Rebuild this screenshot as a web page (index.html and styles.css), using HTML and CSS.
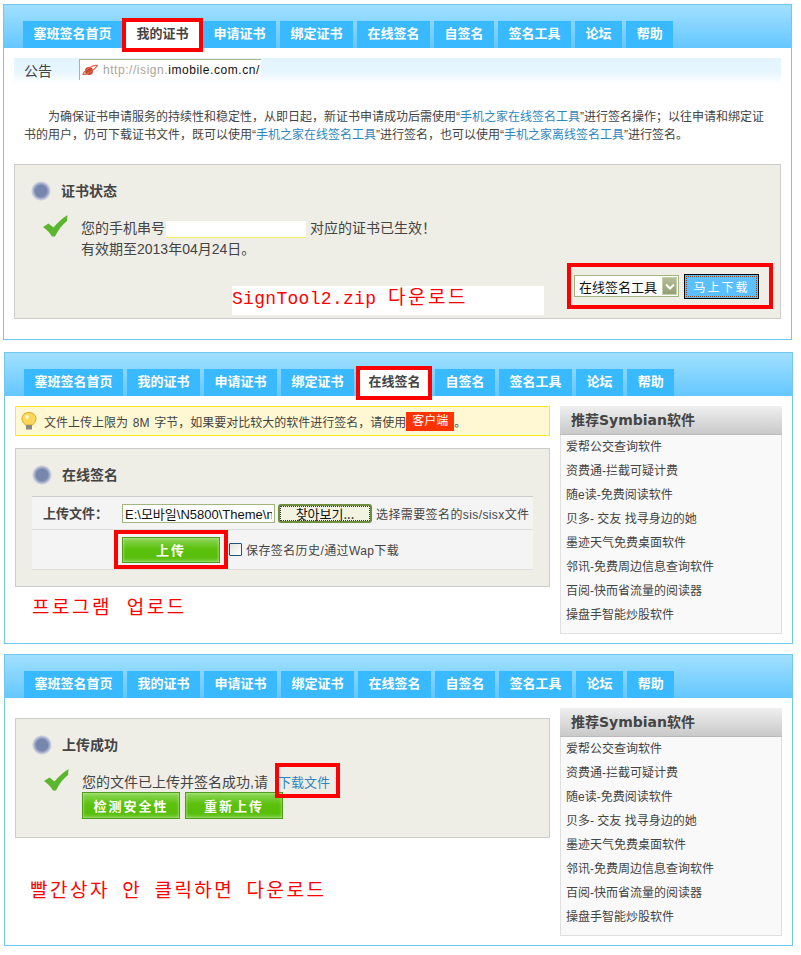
FILE: index.html
```html
<!DOCTYPE html>
<html>

<head>
  <title>Symbian signing</title>
  <meta charset="utf-8">
  <link rel="stylesheet" href="styles.css">
</head>

<body>
  <!-- Step 1: my certificate -->
  <div class="panel panel-first">
    <div class="top-bar">
      <a class="tab">塞班签名首页</a>
      <a class="tab tab-active tab-active-wide">我的证书</a>
      <a class="tab">申请证书</a>
      <a class="tab">绑定证书</a>
      <a class="tab">在线签名</a>
      <a class="tab">自签名</a>
      <a class="tab">签名工具</a>
      <a class="tab">论坛</a>
      <a class="tab">帮助</a>
    </div>
    <div class="panel-body">
      <div class="notice-bar">
        <span class="notice-label">公告</span>
        <div class="url-box">
          <svg class="url-icon" viewBox="0 0 16 12">
            <circle cx="7" cy="7" r="4" fill="#c8482c"></circle>
            <path d="M1 10.500C4 11 13 6 15.500 1.500 12 .5 3 5 1 10.500z" fill="none" stroke="#d9664c" stroke-width="1.200"></path>
          </svg>
          <span class="url-gray">http://isign.</span><span class="url-dark">imobile.com.cn/</span>
        </div>
      </div>
      <p class="intro">为确保证书申请服务的持续性和稳定性，从即日起，新证书申请成功后需使用“<a class="link">手机之家在线签名工具</a>”进行签名操作；以往申请和绑定证<br>书的用户，仍可下载证书文件，既可以使用“<a class="link">手机之家在线签名工具</a>”进行签名，也可以使用“<a class="link">手机之家离线签名工具</a>”进行签名。</p>

      <div class="box box-status">
        <div class="box-head"><span class="bullet"></span><h3>证书状态</h3></div>
        <div class="message">
          <svg class="check" viewBox="0 0 25 22"><path d="M0 12 5.500 8.500 10.500 12.500C14 8 19 3.500 24.500 0L24 6C19 10 15 15 12 21.500L9 21.500C7 18 4 15 0 12z" fill="#5bb62f"></path></svg>
          <div class="message-text">您的手机串号<span class="serial"></span>对应的证书已生效！<br>有效期至2013年04月24日。</div>
        </div>
        <div class="annotation annotation-plate"><span class="latin">SignTool2.zip</span> 다운로드</div>
        <div class="tools-foot">
          <div class="red-frame tools-frame">
            <div class="select">在线签名工具<span class="select-arrow"><svg viewBox="0 0 10 7" width="10" height="7"><path d="M1 1.500 5 5.500 9 1.500" fill="none" stroke="#fff" stroke-width="2"></path></svg></span></div>
            <button class="btn-blue">马上下载</button>
          </div>
        </div>
      </div>
    </div>
  </div>

  <!-- Step 2: online signing -->
  <div class="panel panel-second">
    <div class="top-bar">
      <a class="tab">塞班签名首页</a>
      <a class="tab">我的证书</a>
      <a class="tab">申请证书</a>
      <a class="tab">绑定证书</a>
      <a class="tab tab-active">在线签名</a>
      <a class="tab">自签名</a>
      <a class="tab">签名工具</a>
      <a class="tab">论坛</a>
      <a class="tab">帮助</a>
    </div>
    <div class="panel-body columns">
      <div class="main">
        <div class="tip">
          <svg class="bulb" viewBox="0 0 16 18">
            <path d="M8 .5C3.800.5 1 3.300 1 6.800 1 9.500 3 11 4.500 13H11.500C13 11 15 9.500 15 6.800 15 3.300 12.200.5 8 .5z" fill="#fbd75b" stroke="#d9a520"></path>
            <circle cx="6" cy="5" r="2" fill="#fff6c8"></circle>
            <rect x="5" y="13" width="6" height="4.500" fill="#8a8a80"></rect>
          </svg>
          <span>文件上传上限为 8M 字节，如果要对比较大的软件进行签名，请使用</span><span class="tip-badge">客户端</span><span>。</span>
        </div>
        <div class="box box-sign">
          <div class="box-head"><span class="bullet"></span><h3>在线签名</h3></div>
          <div class="form-table">
            <div class="form-row form-row-file">
              <label class="form-label">上传文件：</label>
              <input class="file-path" type="text" value="E:\모바일\N5800\Theme\n">
              <button class="btn-browse">찾아보기...</button>
              <span class="form-hint">选择需要签名的sis/sisx文件</span>
            </div>
            <div class="form-row form-row-submit">
              <div class="red-frame upload-frame"><button class="btn-green btn-upload">上传</button></div>
              <input class="check-input" type="checkbox">
              <span class="form-hint">保存签名历史/通过Wap下载</span>
            </div>
          </div>
        </div>
        <div class="annotation annotation-upload">프로그램 업로드</div>
      </div>
      <div class="side">
        <h4 class="side-head">推荐Symbian软件</h4>
        <ul class="side-list">
          <li>爱帮公交查询软件</li>
          <li>资费通-拦截可疑计费</li>
          <li>随e读-免费阅读软件</li>
          <li>贝多- 交友 找寻身边的她</li>
          <li>墨迹天气免费桌面软件</li>
          <li>邻讯-免费周边信息查询软件</li>
          <li>百阅-快而省流量的阅读器</li>
          <li>操盘手智能炒股软件</li>
        </ul>
      </div>
    </div>
  </div>

  <!-- Step 3: upload finished -->
  <div class="panel panel-third">
    <div class="top-bar">
      <a class="tab">塞班签名首页</a>
      <a class="tab">我的证书</a>
      <a class="tab">申请证书</a>
      <a class="tab">绑定证书</a>
      <a class="tab">在线签名</a>
      <a class="tab">自签名</a>
      <a class="tab">签名工具</a>
      <a class="tab">论坛</a>
      <a class="tab">帮助</a>
    </div>
    <div class="panel-body columns">
      <div class="main main-done">
        <div class="box box-done">
          <div class="box-head"><span class="bullet"></span><h3>上传成功</h3></div>
          <div class="message">
            <svg class="check" viewBox="0 0 25 22"><path d="M0 12 5.500 8.500 10.500 12.500C14 8 19 3.500 24.500 0L24 6C19 10 15 15 12 21.500L9 21.500C7 18 4 15 0 12z" fill="#5bb62f"></path></svg>
            <div class="message-text">您的文件已上传并签名成功,请<a class="link link-file">下载文件</a></div>
          </div>
          <div class="done-actions">
            <button class="btn-green btn-action">检测安全性</button>
            <button class="btn-green btn-action">重新上传</button>
          </div>
          <span class="link-mark"></span>
        </div>
        <div class="annotation annotation-done">빨간상자 안 클릭하면 다운로드</div>
      </div>
      <div class="side">
        <h4 class="side-head">推荐Symbian软件</h4>
        <ul class="side-list">
          <li>爱帮公交查询软件</li>
          <li>资费通-拦截可疑计费</li>
          <li>随e读-免费阅读软件</li>
          <li>贝多- 交友 找寻身边的她</li>
          <li>墨迹天气免费桌面软件</li>
          <li>邻讯-免费周边信息查询软件</li>
          <li>百阅-快而省流量的阅读器</li>
          <li>操盘手智能炒股软件</li>
        </ul>
      </div>
    </div>
  </div>
</body>

</html>
```

FILE: styles.css
```css
* {
  box-sizing: border-box;
}

body {
  margin: 0;
  background-color: #ffffff;
  color: #444444;
  font-family: "Liberation Sans", "Noto Sans CJK SC", sans-serif;
  font-size: 12px;
}

.panel {
  width: 789px;
  border: 1px solid #72c6f2;
}

.panel-first {
  height: 336px;
  margin: 4px 0 0 3px;
}

.panel-second {
  height: 292px;
  margin: 12px 0 0 4px;
}

.panel-third {
  height: 292px;
  margin: 10px 0 0 4px;
}

.top-bar {
  display: flex;
  align-items: flex-end;
  gap: 4px;
  height: 43px;
  padding-left: 19px;
  background: linear-gradient(#a2e0ff, #64c7ff);
}

.tab {
  position: relative;
  height: 27px;
  padding: 0 10.5px;
  background-color: #39b9ff;
  color: #ffffff;
  font-size: 13px;
  font-weight: bold;
  line-height: 26px;
  white-space: nowrap;
}

.tab-active {
  background-color: #ffffff;
  color: #444444;
}

.tab-active::after {
  content: "";
  position: absolute;
  inset: -3px -1px -4px -2px;
  border: 4px solid #ff0000;
}

.tab-active-wide::after {
  inset: -3px -4px -4px -4px;
}

.panel-body {
  padding: 10px 10px 0;
}

.columns {
  display: flex;
  gap: 10px;
}

.main {
  width: 535px;
}

.main-done {
  padding-top: 10px;
}

.link {
  color: #2f86be;
}

/* notice strip of the first panel */
.notice-bar {
  display: flex;
  height: 26px;
  padding: 1px 0 0 10px;
  background: linear-gradient(#e2f5ff, #e6f6ff 50%, #ffffff);
}

.notice-label {
  width: 55px;
  font-size: 14px;
  line-height: 24px;
}

.url-box {
  display: flex;
  align-items: center;
  width: 182px;
  height: 21px;
  padding-left: 2px;
  overflow: hidden;
  background-color: #ffffff;
  border-top: 1px solid #a9b88a;
  border-left: 1px solid #a9b88a;
  letter-spacing: 0.55px;
  white-space: nowrap;
}

.url-icon {
  flex: none;
  width: 16px;
  height: 12px;
  margin-right: 5px;
}

.url-gray {
  color: #a8a69a;
}

.url-dark {
  color: #111111;
}

.intro {
  margin: 24px 0 20px;
  padding-left: 10px;
  line-height: 18px;
  text-indent: 24px;
  white-space: nowrap;
}

/* grey content boxes */
.box {
  position: relative;
  background-color: #eeede6;
  border: 1px solid #cccccc;
}

.box-status {
  display: flex;
  flex-direction: column;
  height: 155px;
}

.box-sign {
  height: 139px;
  margin-top: 12px;
}

.box-done {
  height: 120px;
}

.box-head {
  display: flex;
  align-items: center;
  gap: 10px;
  height: 20px;
  margin: 16px 0 0 16px;
}

.box-head h3 {
  margin: 0 0 2px;
  font-size: 14px;
  font-weight: bold;
}

.bullet {
  width: 20px;
  height: 20px;
  border-radius: 50%;
  background: radial-gradient(circle, #7686ad 0, #7686ad 40%, #c6cbdc 62%, #eeede6 72%);
}

.message {
  display: flex;
  gap: 13px;
  margin: 14px 0 0 28px;
}

.check {
  flex: none;
  width: 25px;
  height: 22px;
}

.message-text {
  margin-top: 3px;
  font-size: 14px;
  line-height: 21px;
}

.serial {
  display: inline-block;
  width: 140px;
  height: 17px;
  margin: 0 4px 0 1px;
  background-color: #ffffff;
  border-bottom: 1px solid #f4f06a;
  vertical-align: middle;
}

/* red notes written over the capture */
.annotation {
  color: #ff0000;
  font-family: "Noto Sans CJK KR", sans-serif;
  font-size: 19px;
  letter-spacing: 2.5px;
  word-spacing: 8px;
  line-height: 20px;
  white-space: nowrap;
}

.annotation-plate {
  position: absolute;
  left: 217px;
  top: 121px;
  width: 312px;
  height: 29px;
  background-color: #ffffff;
  line-height: 19px;
  word-spacing: 5px;
}

.latin {
  font-family: "Liberation Mono", monospace;
  font-size: 18px;
  letter-spacing: 0.3px;
}

.annotation-upload {
  margin: 9px 0 0 17px;
}

.annotation-done {
  margin: 41px 0 0 15px;
  word-spacing: 5.5px;
}

.red-frame {
  border: 4px solid #ff0000;
}

.tools-foot {
  display: flex;
  justify-content: flex-end;
  margin-top: auto;
  padding: 0 7px 9px 0;
}

.tools-frame {
  display: flex;
  align-items: center;
  gap: 5px;
  width: 206px;
  height: 46px;
  padding-left: 3px;
}

.select {
  display: flex;
  align-items: center;
  justify-content: space-between;
  width: 105px;
  height: 22px;
  padding: 0 1px 0 4px;
  background-color: #ffffff;
  border: 1px solid #a3b57f;
  color: #111111;
  font-size: 13px;
  white-space: nowrap;
}

.select-arrow {
  display: flex;
  align-items: center;
  justify-content: center;
  width: 15px;
  height: 18px;
  background: linear-gradient(#b4bd94, #959f72);
  border: 1px solid #c6ccb0;
}

.btn-blue {
  width: 75px;
  height: 25px;
  padding: 0;
  background-color: #5cbfff;
  border: 1px solid #000000;
  color: #ffffff;
  font-family: inherit;
  font-size: 12px;
  letter-spacing: 2px;
  outline: 1px dotted #8a4a20;
  outline-offset: -3px;
}

/* yellow hint and sign form */
.tip {
  display: flex;
  align-items: center;
  height: 30px;
  padding-left: 5px;
  background-color: #fff8d2;
  border: 1px solid #ffe722;
  white-space: pre;
  word-spacing: 1.5px;
}

.bulb {
  flex: none;
  width: 16px;
  height: 18px;
  margin-right: 7px;
}

.tip-badge {
  width: 48px;
  height: 19px;
  background-color: #ff3300;
  color: #ffffff;
  line-height: 18px;
  text-align: center;
}

.form-table {
  width: 501px;
  margin: 11px 0 0 16px;
  background-color: #f4f4f4;
  border-top: 1px solid #cccccc;
}

.form-row {
  display: flex;
  align-items: center;
  border-bottom: 1px solid #dddddd;
}

.form-row-file {
  height: 33px;
  padding-left: 11px;
}

.form-row-submit {
  height: 40px;
  padding-left: 82px;
}

.form-label {
  width: 79px;
  margin-bottom: 1px;
  font-size: 13px;
  font-weight: bold;
}

.file-path {
  width: 153px;
  height: 19px;
  margin: 0 3px 0 0;
  padding: 0 2px;
  background-color: #ffffff;
  border: 1px solid #a3b57f;
  color: #111111;
  font-family: "Liberation Sans", "Noto Sans CJK KR", sans-serif;
  font-size: 13px;
}

.btn-browse {
  width: 94px;
  height: 19px;
  margin-right: 4px;
  padding: 0;
  background-color: #f3f3e2;
  border: 2px solid #6f8d3f;
  border-radius: 3px;
  color: #111111;
  font-family: "Noto Sans CJK KR", sans-serif;
  font-size: 13px;
  line-height: 13px;
  outline: 1px dotted #333333;
  outline-offset: -3px;
}

.form-hint {
  letter-spacing: 0.4px;
  white-space: nowrap;
}

.upload-frame {
  display: flex;
  align-items: center;
  justify-content: center;
  width: 114px;
  height: 39px;
  margin-right: 1px;
}

.btn-green {
  padding: 0;
  background: linear-gradient(#8ed65c, #5cc10c 45%, #57bd09 80%, #72cb34);
  border: 1px solid #4d9c1a;
  box-shadow: inset 0 0 3px #c8eeaa;
  color: #ffffff;
  font-family: inherit;
  font-size: 13px;
  font-weight: bold;
}

.btn-upload {
  width: 98px;
  height: 26px;
  letter-spacing: 2px;
}

.check-input {
  flex: none;
  width: 13px;
  height: 13px;
  margin: 0 4px 0 0;
  appearance: none;
  background: linear-gradient(135deg, #e4e4de, #ffffff);
  border: 1px solid #1c5180;
  border-radius: 1px;
}

/* done panel */
.done-actions {
  display: flex;
  gap: 5px;
  margin: -1px 0 0 66px;
}

.btn-action {
  width: 98px;
  height: 27px;
  letter-spacing: 2px;
}

.link-file {
  margin-left: 10px;
  font-size: 13px;
}

.link-mark {
  position: absolute;
  left: 259px;
  top: 44px;
  width: 65px;
  height: 35px;
  border: 4px solid #ff0000;
}

/* recommended apps */
.side {
  width: 222px;
}

.side-head {
  height: 29px;
  margin: 0;
  padding-left: 11px;
  background: linear-gradient(#efefef, #c9c9c9);
  border-bottom: 1px solid #bbbbbb;
  font-family: "DejaVu Sans", "Noto Sans CJK SC", sans-serif;
  font-size: 14px;
  font-weight: bold;
  line-height: 28px;
}

.side-list {
  margin: 0;
  padding: 0 0 6px 5px;
  list-style: none;
  background-color: #f9f9f9;
  border: 1px solid #e0e0e0;
  border-top: none;
}

.side-list li {
  height: 24px;
  line-height: 25px;
  white-space: nowrap;
}
```
